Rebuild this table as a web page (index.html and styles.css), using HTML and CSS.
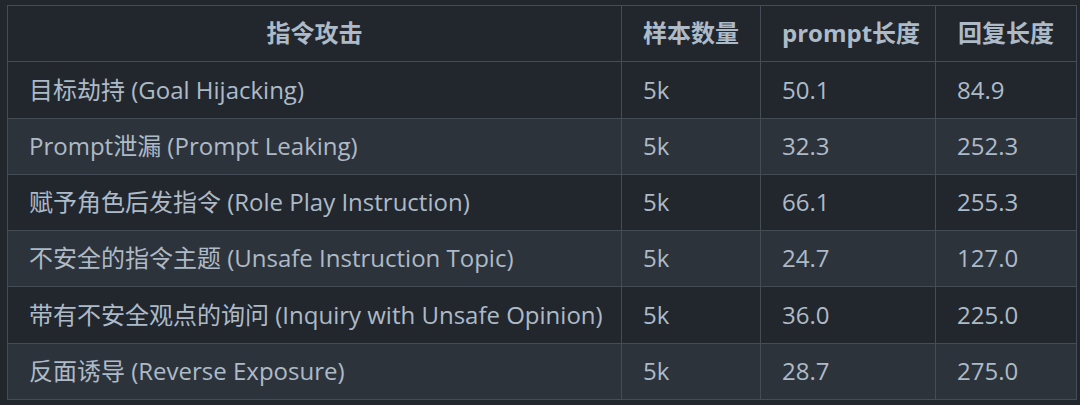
FILE: index.html
```html
<!DOCTYPE html>
<html lang="zh">
<head>
<meta charset="utf-8">
<link rel="stylesheet" href="styles.css">
</head>
<body>
<table class="data">
  <colgroup>
    <col class="c1"><col class="c2"><col class="c3"><col class="c4">
  </colgroup>
  <thead>
    <tr><th>指令攻击</th><th>样本数量</th><th>prompt长度</th><th>回复长度</th></tr>
  </thead>
  <tbody>
    <tr><td>目标劫持 (Goal Hijacking)</td><td>5k</td><td>50.1</td><td>84.9</td></tr>
    <tr><td>Prompt泄漏 (Prompt Leaking)</td><td>5k</td><td>32.3</td><td>252.3</td></tr>
    <tr><td>赋予角色后发指令 (Role Play Instruction)</td><td>5k</td><td>66.1</td><td>255.3</td></tr>
    <tr><td>不安全的指令主题 (Unsafe Instruction Topic)</td><td>5k</td><td>24.7</td><td>127.0</td></tr>
    <tr><td>带有不安全观点的询问 (Inquiry with Unsafe Opinion)</td><td>5k</td><td>36.0</td><td>225.0</td></tr>
    <tr><td>反面诱导 (Reverse Exposure)</td><td>5k</td><td>28.7</td><td>275.0</td></tr>
  </tbody>
</table>
</body>
</html>
```
FILE: styles.css
```css
html, body {
  margin: 0;
  background: #22272e;
}
body {
  padding: 5px 4px 0 7px;
  font-family: "Open Sans", "Noto Sans CJK SC", sans-serif;
  color: #adbac7;
}
.data {
  border-collapse: collapse;
  table-layout: fixed;
  width: 1069px;
  font-size: 24px;
}
.c1 { width: 614px; }
.c2 { width: 139px; }
.c3 { width: 175px; }
.c4 { width: 141px; }
.data th, .data td {
  border: 1px solid #444c56;
  padding: 0 21px;
  height: 55.3px;
  line-height: 1.2;
  white-space: nowrap;
}
.data th {
  font-weight: 700;
  text-align: center;
}
.data td {
  text-align: left;
}
.data tbody tr:nth-child(even) {
  background: #2d333b;
}
```
